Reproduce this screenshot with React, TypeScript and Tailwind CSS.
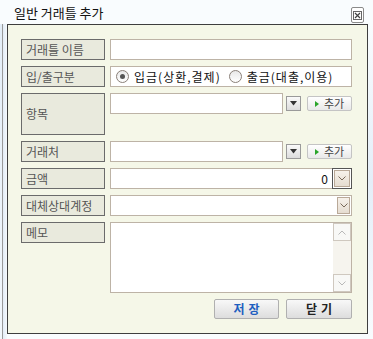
import React from "react";

const font = { fontFamily: '"Noto Sans CJK KR", "Noto Sans", sans-serif' };

function Label({ children, tall }: { children: React.ReactNode; tall?: boolean }) {
  return (
    <div
      className={`w-[84px] ${tall ? "h-[42px]" : "h-[21px]"} shrink-0 border border-[#6b6b6b] bg-[#e9eadd] text-[#555] text-[12px] leading-none flex items-center pl-[4px]`}
    >
      {children}
    </div>
  );
}

function SmallDrop() {
  return (
    <div className="w-[15px] h-[15px] shrink-0 border border-[#9a9a9a] bg-gradient-to-b from-[#fafafa] to-[#dcdcdc] flex items-center justify-center">
      <svg width="7" height="5" viewBox="0 0 7 5">
        <path d="M0 0 L7 0 L3.5 4.5 Z" fill="#333" />
      </svg>
    </div>
  );
}

function AddBtn() {
  return (
    <div className="w-[45px] h-[15px] shrink-0 border border-[#c4c4c4] rounded-[2px] bg-gradient-to-b from-[#ffffff] to-[#e9e9e9] flex items-center justify-center gap-[5px] text-[11px] text-[#444] leading-none">
      <svg width="4" height="6" viewBox="0 0 4 6">
        <path d="M0 0 L4 3 L0 6 Z" fill="#2aa52a" />
      </svg>
      <span>추가</span>
    </div>
  );
}

function Chevron({ up, color = "#7a6a5a" }: { up?: boolean; color?: string }) {
  return (
    <svg width="8" height="5" viewBox="0 0 8 5">
      <path
        d={up ? "M0.5 4.5 L4 1 L7.5 4.5" : "M0.5 0.5 L4 4 L7.5 0.5"}
        stroke={color}
        strokeWidth="1"
        fill="none"
      />
    </svg>
  );
}

function Radio({ checked }: { checked?: boolean }) {
  return (
    <div className="w-[13px] h-[13px] shrink-0 rounded-full border border-[#8a8078] bg-gradient-to-b from-[#e8e8e8] to-[#ffffff] flex items-center justify-center">
      {checked && <div className="w-[5px] h-[5px] rounded-full bg-[#555]" />}
    </div>
  );
}

export default function App() {
  return (
    <div className="w-[373px] h-[339px] bg-[#f9fcfe] overflow-hidden flex flex-col" style={font}>
      {/* title bar */}
      <div className="h-[24px] flex items-start shrink-0">
        <div className="pl-[14px] pt-[6px] text-[13px] leading-none text-[#111]">일반 거래틀 추가</div>
        <div className="ml-auto mr-[9px] mt-[7px] w-[13px] h-[16px] border border-[#8a8a8a] rounded-[2px] bg-white flex items-center justify-center">
          <svg width="9" height="9" viewBox="0 0 9 9">
            <rect x="0.5" y="0.5" width="8" height="8" fill="none" stroke="#666" strokeWidth="1" />
            <path d="M2 2 L7 7 M7 2 L2 7" stroke="#444" strokeWidth="1.2" />
          </svg>
        </div>
      </div>

      {/* body */}
      <div className="flex flex-1 min-h-0">
        <div className="w-[2px] shrink-0 bg-gradient-to-b from-[#e4eef8] to-[#f2f7fc]" />
        <div className="w-[1px] shrink-0 bg-[#9a9a9a]" />
        <div className="w-[4px] shrink-0 bg-gradient-to-r from-[#e2ecf6] to-[#f5f9fc]" />
        <div className="w-[361px] h-[310px] shrink-0 border border-[#3e3e3e] bg-[#f5f7e8] pl-[13px] pr-[15px] pt-[14px] flex flex-col gap-[6px]">
          {/* 거래틀 이름 */}
          <div className="flex gap-[5px]">
            <Label>거래틀 이름</Label>
            <div className="flex-1 h-[21px] border border-[#bdb3a6] bg-white" />
          </div>
          {/* 입/출구분 */}
          <div className="flex gap-[5px]">
            <Label>입/출구분</Label>
            <div className="flex-1 h-[21px] border border-[#bdb3a6] bg-white flex items-center pl-[5px] text-[12px] leading-none text-[#111] tracking-[1px] whitespace-nowrap overflow-hidden">
              <Radio checked />
              <span className="ml-[5px]">입금(상환,결제)</span>
              <div className="ml-[8px]">
                <Radio />
              </div>
              <span className="ml-[5px]">출금(대출,이용)</span>
            </div>
          </div>
          {/* 항목 */}
          <div className="flex gap-[5px]">
            <Label tall>항목</Label>
            <div className="flex-1 h-[21px] flex items-center">
              <div className="w-[173px] h-[21px] border border-[#bdb3a6] bg-white" />
              <div className="ml-[3px]">
                <SmallDrop />
              </div>
              <div className="ml-auto">
                <AddBtn />
              </div>
            </div>
          </div>
          {/* 거래처 */}
          <div className="flex gap-[5px]">
            <Label>거래처</Label>
            <div className="flex-1 h-[21px] flex items-center">
              <div className="w-[173px] h-[21px] border border-[#bdb3a6] bg-white" />
              <div className="ml-[3px]">
                <SmallDrop />
              </div>
              <div className="ml-auto">
                <AddBtn />
              </div>
            </div>
          </div>
          {/* 금액 */}
          <div className="flex gap-[5px]">
            <Label>금액</Label>
            <div className="flex-1 h-[21px] flex">
              <div className="flex-1 h-[21px] border border-[#bdb3a6] border-r-0 bg-white flex items-center justify-end pr-[4px] text-[12px] leading-none text-[#111]">
                0
              </div>
              <div className="w-[20px] h-[21px] border border-[#555] bg-white flex items-center justify-center">
                <div className="w-[16px] h-[17px] border border-[#b9a998] bg-gradient-to-b from-[#f6f1ea] to-[#e6ddd1] flex items-center justify-center">
                  <Chevron />
                </div>
              </div>
            </div>
          </div>
          {/* 대체상대계정 */}
          <div className="flex gap-[5px]">
            <Label>대체상대계정</Label>
            <div className="flex-1 h-[21px] border border-[#bdb3a6] bg-white flex items-center justify-end pr-[1px]">
              <div className="w-[13px] h-[17px] border border-[#b9a998] bg-gradient-to-b from-[#f6f1ea] to-[#e6ddd1] flex items-center justify-center">
                <Chevron />
              </div>
            </div>
          </div>
          {/* 메모 */}
          <div className="flex gap-[5px]">
            <Label>메모</Label>
            <div className="flex-1 h-[71px] border border-[#bdb3a6] bg-white flex justify-end">
              <div className="w-[18px] h-full bg-[#f6f4ee] flex flex-col justify-between">
                <div className="h-[18px] border border-[#cfc8bf] bg-[#f8f8f6] flex items-center justify-center">
                  <Chevron up color="#b8b8b8" />
                </div>
                <div className="h-[18px] border border-[#cfc8bf] bg-[#f8f8f6] flex items-center justify-center">
                  <Chevron color="#b8b8b8" />
                </div>
              </div>
            </div>
          </div>
          {/* buttons */}
          <div className="flex justify-end gap-[7px]">
            <div className="w-[65px] h-[20px] border border-[#b0b0b0] rounded-[2px] bg-gradient-to-b from-[#f8f8f8] to-[#dddddd] flex items-center justify-center text-[12px] font-bold leading-none text-[#1e5fc0] tracking-[4px] pl-[4px]">
              저장
            </div>
            <div className="w-[66px] h-[20px] border border-[#b0b0b0] rounded-[2px] bg-gradient-to-b from-[#f8f8f8] to-[#dddddd] flex items-center justify-center text-[12px] font-bold leading-none text-[#222] tracking-[4px] pl-[4px]">
              닫기
            </div>
          </div>
        </div>
        <div className="w-[5px] shrink-0 bg-gradient-to-b from-[#f9fcfe] via-[#e4eef8] to-[#f9fcfe]" />
      </div>
    </div>
  );
}
